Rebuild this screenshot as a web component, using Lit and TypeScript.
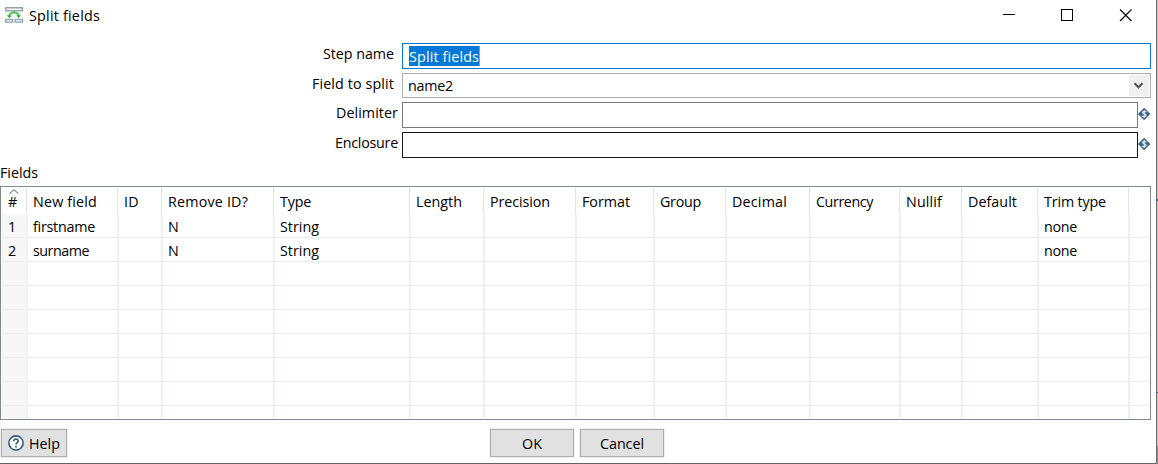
import { LitElement, html, css } from "lit";
import { customElement } from "lit/decorators.js";

type Column = { label: string; width: number; text: number };

// width: column width in px; text: width taken by the label
const COLUMNS: Column[] = [
  { label: "New field", width: 91, text: 64 },
  { label: "ID", width: 44, text: 15 },
  { label: "Remove ID?", width: 112, text: 80 },
  { label: "Type", width: 136, text: 31 },
  { label: "Length", width: 74, text: 46 },
  { label: "Precision", width: 92, text: 60 },
  { label: "Format", width: 78, text: 48 },
  { label: "Group", width: 72, text: 41 },
  { label: "Decimal", width: 84, text: 55 },
  { label: "Currency", width: 90, text: 57 },
  { label: "Nullif", width: 62, text: 36 },
  { label: "Default", width: 76, text: 49 },
  { label: "Trim type", width: 91, text: 62 },
];

const ROWS: Record<string, [string, number]>[] = [
  { "New field": ["firstname", 62], "Remove ID?": ["N", 11], Type: ["String", 39], "Trim type": ["none", 33] },
  { "New field": ["surname", 56], "Remove ID?": ["N", 11], Type: ["String", 39], "Trim type": ["none", 33] },
  {}, {}, {}, {}, {}, {}, {},
];

// A text run whose tracking is tuned to fill a given width.
@customElement("fit-text")
class FitText extends LitElement {
  static properties = { text: { type: String }, width: { type: Number } };
  declare text: string;
  declare width: number;
  static styles = css`
    :host { display: inline-block; white-space: pre; }
    .run { display: inline-block; }
  `;
  render() {
    return html`<span class="run">${this.text}</span>`;
  }
  updated() {
    const run = this.renderRoot.querySelector<HTMLElement>(".run")!;
    run.style.letterSpacing = "0";
    const gap = (this.width - run.getBoundingClientRect().width) / this.text.length;
    run.style.letterSpacing = `${gap.toFixed(3)}px`;
  }
}

const fit = (text: string, width: number) =>
  html`<fit-text .text=${text} .width=${width}></fit-text>`;

const variableIcon = html`<svg class="var" width="13" height="12" viewBox="0 0 13 12">
  <path d="M6.2 0L12.2 6L6.2 12L.2 6Z" fill="#3f6484" stroke="#3f6484" stroke-width=".5" stroke-linejoin="round" />
  <path d="M8.3 4.1C7.7 3 4.5 2.9 4.5 4.6C4.5 6.3 8.1 5.5 8.1 7.4C8 9.1 4.8 9 4 7.9M6.2 2V10" fill="none" stroke="#dce7ef" stroke-width="1.2" />
</svg>`;

@customElement("app-root")
class AppRoot extends LitElement {
  static styles = css`
    :host {
      display: block;
      box-sizing: border-box;
      width: 1158px;
      height: 464px;
      overflow: hidden;
      padding-right: 1px;
      background: linear-gradient(#c3c3c3 0 199px, #34506a 199px 201px, #c3c3c3 201px 392px, #34506a 392px 393px, #c3c3c3 393px 446px, #8c8c8c 446px);
      font: 14.3px/20px "Open Sans", "Noto Sans", sans-serif;
      color: #000;
    }
    .window {
      box-sizing: border-box;
      height: 464px;
      background: #fff;
      border-right: 1px solid #707070;
      border-bottom: 1px solid #646464;
    }
    svg { display: block; flex: none; }
    .title { display: flex; height: 43px; align-items: flex-start; }
    .logo { margin: 7px 6px 0 5px; }
    .title fit-text { margin-top: 6px; }
    .controls { display: flex; margin: 9px 22px 0 auto; }
    .row { display: flex; align-items: flex-start; height: 30px; }
    .row.short { height: 29px; }
    .label { width: 402px; box-sizing: border-box; padding-right: 8px; text-align: right; margin-top: 1px; }
    .label.near { padding-right: 4px; }
    .input {
      box-sizing: border-box;
      width: 749px;
      height: 26px;
      border: 1px solid #0078d7;
      padding: 2px 0 0 6px;
    }
    .selected {
      display: inline-block;
      height: 20px;
      background: #0078d7;
      color: #fff;
      border-right: 1px solid #ff8728;
      line-height: 22px;
    }
    .combo {
      display: flex;
      justify-content: space-between;
      height: 25px;
      border-color: #adadad;
      padding: 1px 1px 1px 5px;
    }
    .combo fit-text { margin-top: 1px; }
    .arrow { width: 20px; height: 21px; background: #f0f0f0; }
    .input.variable { width: 736px; border-color: #7a7a7a; }
    .input.hover { border-color: #171717; }
    .var { margin-top: 6px; }
    .caption { height: 24px; line-height: 22px; }
    .table {
      box-sizing: border-box;
      width: 1151px;
      height: 234px;
      border: 1px solid #828790;
      padding: 1px;
    }
    .head, .line { display: flex; }
    .head { height: 26px; }
    .line { height: 24px; }
    .line:last-child { height: 12px; }
    .cell { box-sizing: border-box; flex: none; padding-left: 5px; }
    .head .cell { border-left: 1px solid #e2e2e2; padding: 4px 0 0 6px; }
    .line .cell { border-left: 2px solid #edf1f6; border-bottom: 1px solid #ededed; padding-top: 3px; }
    .line:last-child .cell, .line:last-child .index { border-bottom: 0; }
    .line .cell.rest { border-left-color: #e8f1fb; }
    .rest { width: 21px; }
    .line .index { background: #f7f7f7; border-bottom: 1px solid #ededed; padding-top: 3px; }
    .index { box-sizing: border-box; width: 24px; padding-left: 6px; }
    .head .index { padding-top: 0; }
    .sort { margin: 1px 0 0 1px; }
    .head .index fit-text { display: block; margin-top: -2px; }
    .footer { display: flex; padding: 9px 0 0 1px; }
    .button {
      box-sizing: border-box;
      display: flex;
      justify-content: center;
      width: 84px;
      height: 28px;
      border: 1px solid #adadad;
      background: #e1e1e1;
      outline: 1px solid #f0f0f0;
      padding-top: 4px;
    }
    .help { width: 66px; gap: 5px; margin-right: 423px; }
    .help svg { margin-top: 1px; }
    .cancel { margin-left: 6px; }
  `;

  render() {
    return html`<div class="window">
      <div class="title">
        <svg class="logo" width="18" height="16" viewBox="0 0 18 16" fill="none">
          <rect x=".75" y=".75" width="16.5" height="3" fill="#fff" stroke="#91a5b5" stroke-width="1.5" />
          <rect x=".75" y="12.5" width="7" height="2.6" fill="#fff" stroke="#91a5b5" stroke-width="1.4" />
          <rect x="10.25" y="12.5" width="7" height="2.6" fill="#fff" stroke="#91a5b5" stroke-width="1.4" />
          <path d="M4.3 10V8.2Q4.3 6.4 6.2 6.1Q9 5.9 9 4.3Q9 5.9 11.8 6.1Q13.7 6.4 13.7 8.2V10" stroke="#3fbf3f" stroke-width="1.6" />
          <path d="M1.8 8.3L4.3 11.2L6.8 8.3ZM11.2 8.3L13.7 11.2L16.2 8.3Z" fill="#32b632" />
        </svg>
        ${fit("Split fields", 71)}
        <svg class="controls" width="132" height="13" viewBox="0 0 132 13" fill="none" stroke="#000">
          <path d="M1 5.5H13" />
          <rect x="59.5" y=".5" width="11" height="11" />
          <path d="M118 .5L129.5 12M129.5 .5L118 12" stroke-width="1.1" />
        </svg>
      </div>
      <div class="row">
        <div class="label">${fit("Step name", 71)}</div>
        <div class="input"><span class="selected">${fit("Split fields", 70)}</span></div>
      </div>
      <div class="row short">
        <div class="label">${fit("Field to split", 82)}</div>
        <div class="input combo">
          ${fit("name2", 45)}
          <svg class="arrow" viewBox="0 0 20 21"><path d="M5.5 8.3L9.5 12.3L13.5 8.3" fill="none" stroke="#505050" stroke-width="2" /></svg>
        </div>
      </div>
      <div class="row">
        <div class="label near">${fit("Delimiter", 62)}</div>
        <div class="input variable"></div>${variableIcon}
      </div>
      <div class="row">
        <div class="label near">${fit("Enclosure", 63)}</div>
        <div class="input variable hover"></div>${variableIcon}
      </div>
      <div class="caption">${fit("Fields", 38)}</div>
      <div class="table">
        <div class="head">
          <div class="index">
            <svg class="sort" width="10" height="5" viewBox="0 0 10 5"><path d="M.5 4.7L5 .7L9.5 4.7" fill="none" stroke="#555" /></svg>
            ${fit("#", 9)}
          </div>
          ${COLUMNS.map((c) => html`<div class="cell" style="width:${c.width}px">${fit(c.label, c.text)}</div>`)}
          <div class="cell rest"></div>
        </div>
        ${ROWS.map((row, i) => html`<div class="line">
          <div class="index">${row["New field"] ? fit(String(i + 1), 8) : ""}</div>
          ${COLUMNS.map((c) => {
            const value = row[c.label];
            return html`<div class="cell" style="width:${c.width}px">${value ? fit(value[0], value[1]) : ""}</div>`;
          })}
          <div class="cell rest"></div>
        </div>`)}
      </div>
      <div class="footer">
        <div class="button help">
          <svg width="16" height="16" viewBox="0 0 16 16" fill="none" stroke="#33597c">
            <circle cx="8" cy="8" r="7.1" fill="#fff" stroke-width="1.6" />
            <path d="M5.7 6.2C5.7 3.2 10.3 3.4 10.2 6.1C10.1 7.7 8 7.6 8 9.6M8 10.7V12.4" stroke-width="1.6" />
          </svg>
          ${fit("Help", 31)}
        </div>
        <div class="button">${fit("OK", 20)}</div>
        <div class="button cancel">${fit("Cancel", 44)}</div>
      </div>
    </div>`;
  }
}
